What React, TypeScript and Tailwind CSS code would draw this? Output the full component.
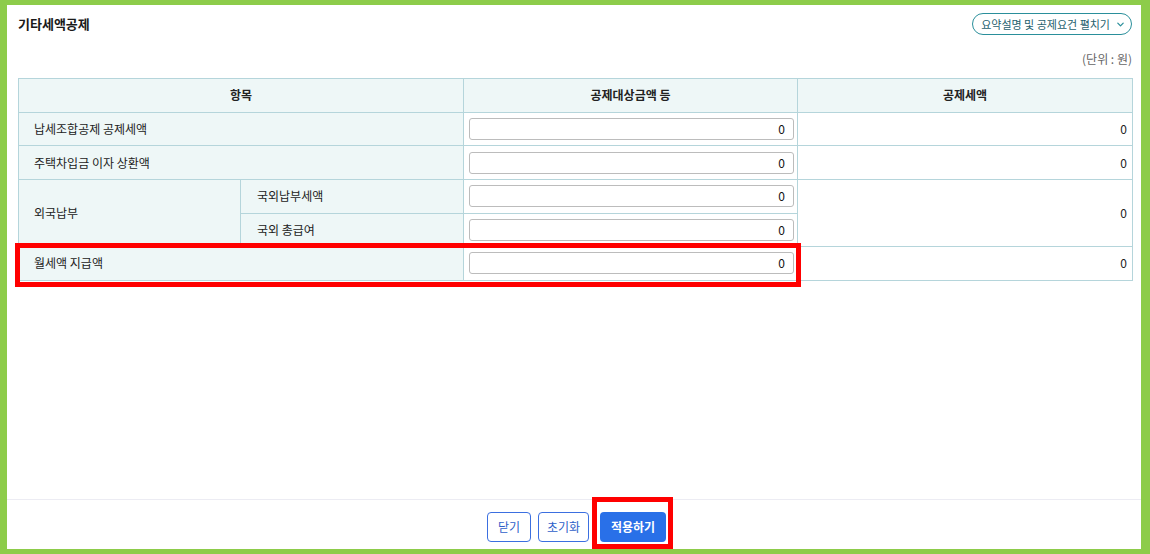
import React from "react";

const font = { fontFamily: '"Noto Sans CJK KR", "Noto Sans", sans-serif' };

function Input() {
  return (
    <div className="ml-[5px] mr-[3px] h-[22px] rounded-[3px] border border-[#bcbcbc] bg-white flex items-center justify-end pr-[8px] text-[12px] text-[#111]">
      0
    </div>
  );
}

export default function App() {
  const td = "border border-[#b5d5db]";
  return (
    <div style={font} className="relative w-[1150px] h-[554px] bg-[#8dcc4a] pl-[7px] pt-[5px] pr-[9px] pb-[5px]">
      <div className="flex h-full flex-col bg-white">
        <div className="flex-1 pl-[11px] pr-[9px]">
          <div className="mt-[8px] flex h-[22px] items-center justify-between">
            <div className="text-[13px] font-bold leading-[18px] text-[#1a1a1a]">기타세액공제</div>
            <div className="flex h-[22px] items-center gap-[6px] rounded-full border border-[#2a8f9b] pl-[8px] pr-[6px] text-[11px] text-[#1f5f6e]">
              <span>요약설명 및 공제요건 펼치기</span>
              <svg width="9" height="9" viewBox="0 0 10 10" fill="none">
                <path d="M2 3.5 L5 6.5 L8 3.5" stroke="#2a8f9b" strokeWidth="1.4" strokeLinecap="round" strokeLinejoin="round" />
              </svg>
            </div>
          </div>
          <div className="mt-[16px] text-right text-[12px] leading-[16px] text-[#666]">(단위 : 원)</div>
          <table className="mt-[11px] w-[1114px] table-fixed border-collapse text-[12px] text-[#222]">
            <colgroup>
              <col className="w-[222px]" />
              <col className="w-[223px]" />
              <col className="w-[334px]" />
              <col className="w-[335px]" />
            </colgroup>
            <thead>
              <tr className="h-[33.8px] bg-[#eef7f7]">
                <th colSpan={2} className={`${td} font-semibold`}>항목</th>
                <th className={`${td} font-semibold`}>공제대상금액 등</th>
                <th className={`${td} font-semibold`}>공제세액</th>
              </tr>
            </thead>
            <tbody>
              <tr className="h-[33.6px]">
                <td colSpan={2} className={`${td} bg-[#eef7f7] pl-[15px]`}>납세조합공제 공제세액</td>
                <td className={td}><Input /></td>
                <td className={`${td} pr-[5px] text-right`}>0</td>
              </tr>
              <tr className="h-[33.6px]">
                <td colSpan={2} className={`${td} bg-[#eef7f7] pl-[15px]`}>주택차입금 이자 상환액</td>
                <td className={td}><Input /></td>
                <td className={`${td} pr-[5px] text-right`}>0</td>
              </tr>
              <tr className="h-[33.6px]">
                <td rowSpan={2} className={`${td} bg-[#eef7f7] pl-[15px]`}>외국납부</td>
                <td className={`${td} bg-[#eef7f7] pl-[16px]`}>국외납부세액</td>
                <td className={td}><Input /></td>
                <td rowSpan={2} className={`${td} pr-[5px] text-right`}>0</td>
              </tr>
              <tr className="h-[33.6px]">
                <td className={`${td} bg-[#eef7f7] pl-[16px]`}>국외 총급여</td>
                <td className={td}><Input /></td>
              </tr>
              <tr className="h-[33.6px]">
                <td colSpan={2} className={`${td} bg-[#eef7f7] pl-[15px]`}>월세액 지급액</td>
                <td className={td}><Input /></td>
                <td className={`${td} pr-[5px] text-right`}>0</td>
              </tr>
            </tbody>
          </table>
        </div>
        <div className="flex h-[50px] items-start justify-center border-t border-[#ececf3] pt-[12px] pl-[5px]">
          <button className="h-[30px] w-[44px] rounded-[4px] border border-[#3b6fe0] bg-white text-[12px] text-[#2f5fc9]">닫기</button>
          <button className="ml-[7px] h-[30px] w-[51px] rounded-[4px] border border-[#3b6fe0] bg-white text-[12px] text-[#2f5fc9]">초기화</button>
          <button className="ml-[11px] h-[30px] w-[66px] rounded-[4px] bg-[#2970e8] text-[12px] font-bold text-white">적용하기</button>
        </div>
      </div>
      <div className="pointer-events-none absolute left-[15px] top-[243px] h-[44px] w-[786px] border-[5px] border-[#ff0000]" />
      <div className="pointer-events-none absolute left-[592px] top-[497px] h-[52px] w-[81px] border-[5px] border-[#ff0000]" />
    </div>
  );
}
